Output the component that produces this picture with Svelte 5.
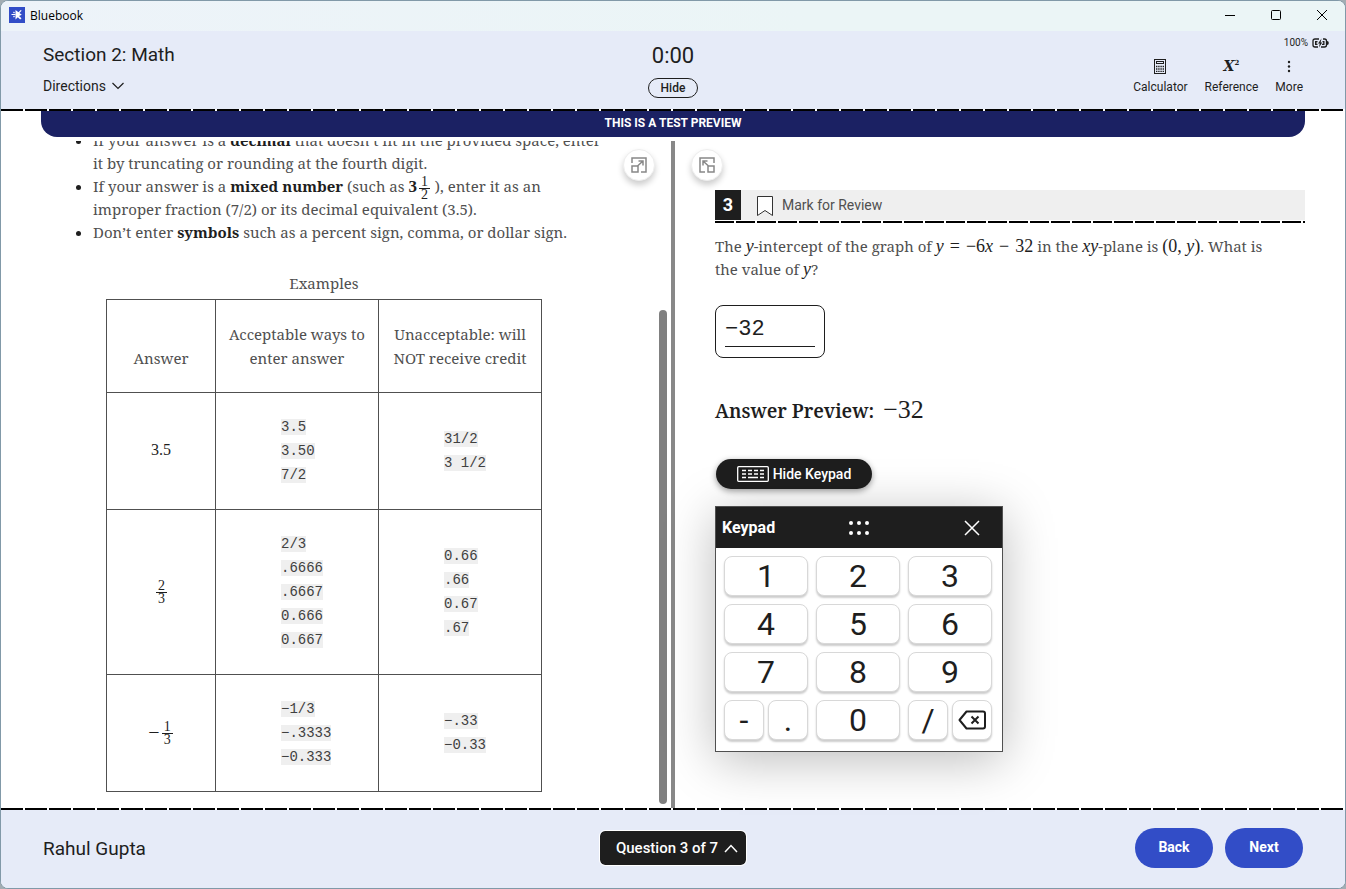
<script>
  let answer = $state('−32');

  const rows = [
    { whole: '3.5', good: ['3.5', '3.50', '7/2'], bad: ['31/2', '3 1/2'] },
    { top: '2', bottom: '3', good: ['2/3', '.6666', '.6667', '0.666', '0.667'], bad: ['0.66', '.66', '0.67', '.67'] },
    { sign: '−', top: '1', bottom: '3', good: ['−1/3', '−.3333', '−0.333'], bad: ['−.33', '−0.33'] }
  ];
  const keys = ['1', '2', '3', '4', '5', '6', '7', '8', '9'];
  const press = (key) => (answer += key);
  const erase = () => (answer = answer.slice(0, -1));
</script>

{#snippet frac(top, bottom)}
  <span class="frac"><span class="num">{top}</span><span>{bottom}</span></span>
{/snippet}

<div class="window">
  <div class="titlebar">
    <svg class="logo" width="16" height="16" viewBox="0 0 16 16">
      <rect width="16" height="16" fill="#324dc7" />
      <path d="M6.500 3v9.500l2.300-2.300 2.400 2.300 1.300-1.200L10 9l2.800-1.200z" fill="#fff" />
      <path d="M2.500 7.500h4M9 6.500l3.200-3.200M4.500 5l1 1M4.500 10l1-1" stroke="#fff" stroke-width="1.200" />
    </svg>
    <span>Bluebook</span>
    <div class="winbuttons">
      <button aria-label="Minimize"><svg width="12" height="12" viewBox="0 0 12 12"><path d="M1 6.500h10" /></svg></button>
      <button aria-label="Maximize"><svg width="12" height="12" viewBox="0 0 12 12"><rect x="1.500" y="1.500" width="9" height="9" rx="1" /></svg></button>
      <button aria-label="Close"><svg width="12" height="12" viewBox="0 0 12 12"><path d="M1 1l10 10M11 1L1 11" /></svg></button>
    </div>
  </div>

  <header>
    <div class="section">
      <h1>Section 2: Math</h1>
      <button class="directions">Directions
        <svg width="12" height="8" viewBox="0 0 12 8"><path d="M.5 1l5.500 5.500L11.500 1" /></svg>
      </button>
    </div>
    <div class="timer">
      <span class="time">0:00</span>
      <button class="hide">Hide</button>
    </div>
    <div class="status">
      <div class="battery">100%
        <svg width="17" height="10" viewBox="0 0 17 10">
          <path d="M7 1H3Q1 1 1 3v4q0 2 2 2h3M11 1h1.500q2 0 2 2v4q0 2-2 2H9" fill="none" stroke="#1e1e1e" stroke-width="1.300" />
          <path d="M3 3h2.500v1.200h-1v1.600h1V7H3zM10.500 3h2v4H10V5.800h1.200V4.200h-.7z" fill="#1e1e1e" />
          <path d="M9.500 .5L6 5.500h1.700L7 9.500l3.200-5H8.600z" fill="#1e1e1e" />
          <path d="M15 3q1.800.2 1.800 2T15 7z" fill="#1e1e1e" />
        </svg>
      </div>
      <div class="tools">
        <button>
          <svg width="14" height="16" viewBox="0 0 14 16">
            <rect x="1.500" y="1.500" width="11" height="14" fill="none" stroke="#1e1e1e" />
            <rect x="3.500" y="3.500" width="7" height="2" fill="none" stroke="#1e1e1e" />
            <path d="M3 8.500h8M3 11h8M3 13.300h8" stroke="#1e1e1e" stroke-width="1.300" stroke-dasharray="1.400 .8" />
          </svg>
          Calculator
        </button>
        <button><span class="xsq"><i>X</i><sup>2</sup></span>Reference</button>
        <button>
          <svg width="4" height="16" viewBox="0 0 4 16"><g fill="#1e1e1e"><circle cx="2" cy="4" r="1.200" /><circle cx="2" cy="8.500" r="1.200" /><circle cx="2" cy="13" r="1.200" /></g></svg>
          More
        </button>
      </div>
    </div>
  </header>
  <div class="dashes"></div>
  <div class="banner">THIS IS A TEST PREVIEW</div>

  <main>
    <section class="left">
      <div class="scrolled">
        <ul>
          <li>If your answer is a <b>decimal</b> that doesn’t fit in the provided space, enter<br />it by truncating or rounding at the fourth digit.</li>
          <li>If your answer is a <b>mixed number</b> (such as <span class="mixed"><b>3</b>{@render frac('1', '2')}</span> ), enter it as an<br />improper fraction (7/2) or its decimal equivalent (3.5).</li>
          <li>Don’t enter <b>symbols</b> such as a percent sign, comma, or dollar sign.</li>
        </ul>
        <table>
          <caption>Examples</caption>
          <thead>
            <tr><th class="c1">Answer</th><th>Acceptable ways to enter answer</th><th>Unacceptable: will NOT receive credit</th></tr>
          </thead>
          <tbody>
            {#each rows as row}
              <tr>
                <td class="value">{#if row.whole}{row.whole}{:else}{#if row.sign}<span class="sign">{row.sign}</span>{/if}{@render frac(row.top, row.bottom)}{/if}</td>
                <td>{#each row.good as g}<div><code>{g}</code></div>{/each}</td>
                <td>{#each row.bad as b}<div><code>{b}</code></div>{/each}</td>
              </tr>
            {/each}
          </tbody>
        </table>
      </div>
      <button class="round" aria-label="Expand left pane">
        <svg width="18" height="18" viewBox="0 0 18 18"><path d="M2 7V2h14v14h-5M2 10h6v6H2zM7.500 10L13 5M8.500 5H13v4.500" /></svg>
      </button>
      <div class="thumb"></div>
    </section>
    <div class="splitter"></div>
    <section class="right">
      <button class="round" aria-label="Expand right pane">
        <svg width="18" height="18" viewBox="0 0 18 18"><path d="M16 7V2H2v14h5M10 10h6v6h-6zM10.500 10L5 5M9.500 5H5v4.500" /></svg>
      </button>
      <div class="question">
        <div class="qbar">
          <span class="qnum">3</span>
          <button class="mark">
            <svg width="18" height="22" viewBox="0 0 18 22"><path d="M1.500 1.500h15v19L9 15.500l-7.500 5z" fill="#fff" stroke="#333" /></svg>
            Mark for Review
          </button>
        </div>
        <div class="dashes short"></div>
        <p>The <i>y</i>-intercept of the graph of <span class="math"><i>y</i><span class="op">=</span>−6<i>x</i><span class="op">−</span>32</span> in the <i>xy</i>-plane is <span class="math">(0, <i>y</i>)</span>. What is<br />the value of <i>y</i>?</p>
        <div class="entry"><input aria-label="Answer" bind:value={answer} /></div>
        <div class="preview"><b>Answer Preview:</b><span>{answer}</span></div>
        <button class="hidepad">
          <svg width="32" height="16" viewBox="0 0 32 16">
            <rect x=".7" y=".7" width="30.600" height="14.600" rx="1" fill="none" stroke="#fff" stroke-width="1.300" />
            <path d="M5 4.500h4M11 4.500h4M17 4.500h4M23 4.500h4M5 8h4M11 8h4M17 8h4M23 8h4M5 11.500h4M11 11.500h10M23 11.500h4" stroke="#fff" stroke-width="1.500" />
          </svg>
          Hide Keypad
        </button>
        <div class="keypad">
          <div class="padhead">
            <span>Keypad</span>
            <svg width="22" height="16" viewBox="0 0 22 16"><g fill="#fff"><circle cx="3" cy="3" r="2" /><circle cx="11" cy="3" r="2" /><circle cx="19" cy="3" r="2" /><circle cx="3" cy="13" r="2" /><circle cx="11" cy="13" r="2" /><circle cx="19" cy="13" r="2" /></g></svg>
            <button aria-label="Close keypad"><svg width="16" height="16" viewBox="0 0 16 16"><path d="M1 1l14 14M15 1L1 15" stroke="#fff" stroke-width="1.500" /></svg></button>
          </div>
          <div class="keys">
            {#each keys as key}<button onclick={() => press(key)}>{key}</button>{/each}
            <div class="pair"><button onclick={() => press('−')}>-</button><button onclick={() => press('.')}>.</button></div>
            <button onclick={() => press('0')}>0</button>
            <div class="pair">
              <button onclick={() => press('/')}>/</button>
              <button aria-label="Backspace" onclick={erase}>
                <svg width="28" height="20" viewBox="0 0 28 20" fill="none" stroke="#1e1e1e" stroke-width="2"><path d="M8.500 1.500H25q2 0 2 2v13q0 2-2 2H8.500L1.500 10z" stroke-linejoin="round" /><path d="M13.500 6.500l7 7M20.500 6.500l-7 7" /></svg>
              </button>
            </div>
          </div>
        </div>
      </div>
    </section>
  </main>

  <div class="dashes"></div>
  <footer>
    <span class="user">Rahul Gupta</span>
    <button class="qnav">Question 3 of 7
      <svg width="14" height="9" viewBox="0 0 14 9"><path d="M1 8l6-6.500L13 8" /></svg>
    </button>
    <div class="nav"><button>Back</button><button>Next</button></div>
  </footer>
</div>

<style>
  :global(body) {
    background: #a3adb3;
  }
  .window, .window * {
    box-sizing: border-box;
  }
  .window {
    height: 100vh;
    display: flex;
    flex-direction: column;
    border: 1px solid #8199a8;
    border-radius: 8px;
    overflow: hidden;
    background: #fff;
    color: #1e1e1e;
    font-family: Roboto, sans-serif;
  }
  button {
    font: inherit;
    color: inherit;
    border: 0;
    padding: 0;
    background: none;
    display: flex;
    align-items: center;
    justify-content: center;
    white-space: nowrap;
  }
  svg {
    display: block;
    flex: none;
  }
  .titlebar {
    height: 30px;
    flex: none;
    display: flex;
    align-items: center;
    gap: 5px;
    padding: 0 0 2px 8px;
    background: linear-gradient(90deg, #edf3f9, #ebf5f6 60%);
    font: 12px 'Open Sans', sans-serif;
    color: #000;
  }
  .winbuttons {
    margin-left: auto;
    display: flex;
  }
  .winbuttons button {
    width: 46px;
    height: 28px;
  }
  .winbuttons svg {
    fill: none;
    stroke: #000;
  }
  header {
    height: 78px;
    flex: none;
    display: grid;
    grid-template-columns: 1fr auto 1fr;
    background: #e6ebf8;
  }
  .section {
    padding: 12px 0 0 42px;
  }
  h1 {
    margin: 0;
    font-size: 19px;
    line-height: 24px;
    font-weight: 400;
  }
  .directions {
    margin-top: 10px;
    gap: 6px;
    font-size: 14px;
    line-height: 18px;
  }
  .directions svg, .qnav svg {
    fill: none;
    stroke: currentColor;
    stroke-width: 1.2;
  }
  .qnav svg {
    stroke-width: 1.5;
  }
  .timer {
    padding-top: 10px;
    display: flex;
    flex-direction: column;
    align-items: center;
  }
  .time {
    font-size: 22px;
    line-height: 30px;
  }
  .hide {
    width: 50px;
    height: 20px;
    margin-top: 7px;
    border: 1px solid #1e1e1e;
    border-radius: 10px;
    font-size: 12px;
    font-weight: 500;
  }
  .status {
    padding: 6px 16px 0 0;
    display: flex;
    flex-direction: column;
    align-items: flex-end;
  }
  .battery {
    display: flex;
    align-items: center;
    gap: 4px;
    font-size: 10px;
    line-height: 12px;
  }
  .tools {
    display: flex;
    gap: 17px;
    margin: 9px 26px 0 0;
  }
  .tools button {
    flex-direction: column;
    gap: 5px;
    font-size: 12px;
    line-height: 16px;
  }
  .xsq {
    height: 16px;
    font: bold 14px/16px 'DejaVu Serif', serif;
  }
  .xsq sup {
    font-size: 7px;
    line-height: 0;
  }
  .dashes {
    height: 2px;
    flex: none;
    background: repeating-linear-gradient(90deg, #000 0 22px, #fff 22px 24px);
  }
  .dashes.short {
    margin-top: 1px;
    background: repeating-linear-gradient(90deg, #000 0 19px, #fff 19px 21px);
  }
  .banner {
    flex: none;
    height: 26px;
    margin: 0 40px 4px;
    border-radius: 0 0 16px 16px;
    background: #1b2163;
    color: #fff;
    text-align: center;
    font-size: 12px;
    line-height: 24px;
    font-weight: 700;
  }
  main {
    flex: 1;
    min-height: 0;
    display: grid;
    grid-template-columns: 1fr 4px 1fr;
    font-family: 'Noto Serif', serif;
    font-size: 15px;
    line-height: 23px;
    color: #505050;
  }
  .splitter {
    background: #888;
  }
  section {
    position: relative;
    min-width: 0;
    min-height: 0;
  }
  .left {
    display: flex;
    flex-direction: column;
    justify-content: flex-end;
    overflow: hidden;
    padding: 0 60px 16px 68px;
  }
  ul {
    margin: 0;
    padding-left: 24px;
    white-space: nowrap;
  }
  li::marker {
    color: #1e1e1e;
  }
  b {
    color: #1e1e1e;
  }
  .math, .mixed, p i, .value, .preview span {
    color: #1e1e1e;
    font-family: 'Liberation Serif', serif;
  }
  .math, p i {
    font-size: 18px;
    line-height: 22px;
  }
  .op {
    margin: 0 6px;
  }
  .mixed {
    font-size: 17px;
    line-height: 20px;
  }
  .frac {
    display: inline-flex;
    flex-direction: column;
    vertical-align: middle;
    margin: 0 1px 0 2px;
    min-width: 11px;
    text-align: center;
    font-size: 14px;
    line-height: 11px;
  }
  .mixed .frac {
    margin-top: -2px;
    margin-bottom: -2px;
  }
  .num {
    padding-bottom: 1px;
    border-bottom: 1px solid #1e1e1e;
  }
  .sign {
    font-size: 20px;
    line-height: 20px;
    vertical-align: middle;
  }
  table {
    margin: 27px 0 0 37px;
    width: 436px;
    border-collapse: collapse;
    table-layout: fixed;
    line-height: 24px;
  }
  caption {
    padding-bottom: 4px;
  }
  th, td {
    border: 1px solid #505050;
    padding: 22px 8px;
    font-weight: 400;
  }
  th {
    vertical-align: bottom;
  }
  .c1 {
    width: 109px;
  }
  td + td {
    padding-left: 65px;
  }
  td.value {
    padding-bottom: 24px;
    text-align: center;
    font-size: 16px;
  }
  td div {
    height: 24px;
    display: flex;
    align-items: center;
  }
  code {
    background: #efefef;
    color: #404040;
    font: 14px/16px 'Liberation Mono', monospace;
  }
  .round {
    position: absolute;
    top: 8px;
    width: 32px;
    height: 32px;
    border-radius: 50%;
    background: #fff;
    border: 1px solid #eee;
    box-shadow: 0 4px 6px #0003;
  }
  .round svg {
    fill: none;
    stroke: #888;
    stroke-width: 1.5;
  }
  .left .round {
    right: 16px;
  }
  .right .round {
    left: 16px;
  }
  .thumb {
    position: absolute;
    right: 4px;
    bottom: 4px;
    width: 8px;
    height: 74%;
    border-radius: 4px;
    background: #808080;
  }
  .question {
    padding: 49px 40px 0;
  }
  .qbar {
    height: 30px;
    display: flex;
    background: #efefef;
    font-family: Roboto, sans-serif;
  }
  .qnum {
    width: 26px;
    background: #1e1e1e;
    color: #fff;
    font-size: 18px;
    line-height: 30px;
    font-weight: 700;
    text-align: center;
  }
  .mark {
    margin-left: 15px;
    gap: 8px;
    font-size: 14px;
  }
  .mark svg {
    margin-top: 2px;
  }
  p {
    margin: 12px 0 24px;
  }
  .entry {
    width: 110px;
    height: 53px;
    padding: 6px 9px 10px;
    border: 1px solid #1e1e1e;
    border-radius: 8px;
  }
  input {
    display: block;
    width: 100%;
    height: 35px;
    border: 0;
    border-bottom: 1px solid #1e1e1e;
    padding: 0;
    outline: 0;
    color: #1e1e1e;
    font: 22px 'Liberation Mono', monospace;
  }
  .preview {
    display: flex;
    align-items: baseline;
    gap: 9px;
    margin-top: 37px;
    height: 31px;
    font-size: 19px;
    line-height: 30px;
  }
  .preview b {
    font-weight: 600;
  }
  .preview span {
    font-size: 26px;
  }
  .hidepad {
    width: 156px;
    height: 30px;
    margin: 33px 0 17px 1px;
    gap: 4px;
    border-radius: 15px;
    background: #1e1e1e;
    color: #fff;
    font: 500 14px Roboto, sans-serif;
    box-shadow: 0 2px 6px #0006;
  }
  .keypad {
    width: 288px;
    border: 1px solid #505050;
    background: #fff;
    color: #1e1e1e;
    font-family: Roboto, sans-serif;
    box-shadow: 0 8px 48px #0004;
  }
  .padhead {
    height: 41px;
    padding: 0 6px;
    display: grid;
    grid-template-columns: 1fr auto 1fr;
    align-items: center;
    background: #1e1e1e;
    color: #fff;
    font-size: 16px;
    font-weight: 700;
  }
  .padhead button {
    justify-self: end;
    margin-right: 16px;
  }
  .keys {
    padding: 8px 10px 11px 8px;
    display: grid;
    grid-template-columns: repeat(3, 1fr);
    gap: 8px;
  }
  .keys button {
    flex: 1;
    height: 40px;
    border: 1px solid #d8d8d8;
    border-radius: 8px;
    background: #fff;
    font-size: 32px;
    box-shadow: 0 2px 2px #0003;
  }
  .pair {
    display: flex;
    gap: 4px;
  }
  footer {
    height: 78px;
    flex: none;
    display: grid;
    grid-template-columns: 1fr auto 1fr;
    align-items: center;
    padding: 0 42px 2px;
    background: #e6ebf8;
  }
  .user {
    font-size: 19px;
  }
  .qnav {
    height: 34px;
    padding: 0 8px 0 16px;
    gap: 6px;
    border-radius: 5px;
    background: #1e1e1e;
    color: #fff;
    font-size: 15px;
    font-weight: 500;
    outline: 1px solid #fff;
  }
  .nav {
    justify-self: end;
    display: flex;
    gap: 12px;
  }
  .nav button {
    width: 78px;
    height: 40px;
    padding-bottom: 2px;
    border-radius: 20px;
    background: #324dc7;
    color: #fff;
    font-size: 14px;
    font-weight: 700;
  }
</style>
